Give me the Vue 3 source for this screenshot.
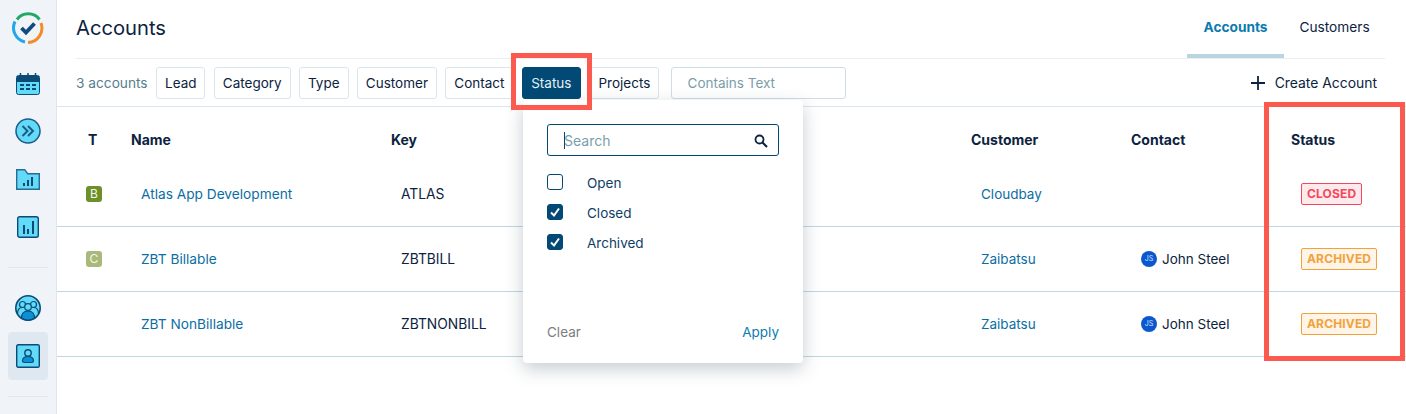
<script setup>
const filters = ['Lead', 'Category', 'Type', 'Customer', 'Contact', 'Status', 'Projects']
const rows = [
  { type: 'B', cls: 'tb', name: 'Atlas App Development', key: 'ATLAS', customer: 'Cloudbay', contact: '', status: 'CLOSED' },
  { type: 'C', cls: 'tc', name: 'ZBT Billable', key: 'ZBTBILL', customer: 'Zaibatsu', contact: 'John Steel', status: 'ARCHIVED' },
  { type: '', cls: '', name: 'ZBT NonBillable', key: 'ZBTNONBILL', customer: 'Zaibatsu', contact: 'John Steel', status: 'ARCHIVED' }
]
const options = [
  { label: 'Open', on: false },
  { label: 'Closed', on: true },
  { label: 'Archived', on: true }
]
</script>

<template>
  <div class="page">
    <aside class="side">
      <svg class="i-logo" width="32" height="32" viewBox="0 0 32 32" fill="none">
        <path d="M5 7.500A14 14 0 0 1 27.500 7.500" stroke="#1fa866" stroke-width="3"/>
        <path d="M29 11A14.500 14.500 0 0 1 16 30.500" stroke="#f28c28" stroke-width="3"/>
        <path d="M13 30A14.500 14.500 0 0 1 3 9.500" stroke="#22a7e8" stroke-width="3"/>
        <path d="M9.500 16l4.500 4.500 8.500-9" stroke="#0f4a80" stroke-width="3.800"/>
      </svg>
      <svg class="i-cal" width="24" height="22" viewBox="0 0 24 22">
        <rect x="0.5" y="2.5" width="23" height="19" rx="2" fill="#62dbf9" stroke="#0d4a75"/>
        <path d="M1 3h22v6H1z" fill="#0d4a75"/>
        <path d="M4.500 0v4M12 0v4M19.500 0v4" stroke="#0d4a75" stroke-width="1.500"/>
        <path d="M4 11h4v2H4zM10 11h4v2h-4zM16 11h4v2h-4zM4 15h4v2H4zM10 15h4v2h-4zM16 15h4v2h-4z" fill="#0d4a75"/>
      </svg>
      <svg class="i-go" width="26" height="26" viewBox="0 0 26 26" fill="none">
        <circle cx="13" cy="13" r="12" fill="#62dbf9" stroke="#1d5a85" stroke-width="1.500"/>
        <path d="M7.500 8l5 5-5 5M13 8l5 5-5 5" stroke="#1d5a85" stroke-width="2"/>
      </svg>
      <svg class="i-folder" width="24" height="21" viewBox="0 0 24 21">
        <path d="M.7.700h8l3 4h11.600v15.600H.7z" fill="#62dbf9" stroke="#2a6b96" stroke-width="1.400"/>
        <path d="M7 14h2v3H7zM11 11h2v6h-2zM15 8h2v9h-2z" fill="#0d4a75"/>
      </svg>
      <svg class="i-chart" width="22" height="22" viewBox="0 0 22 22">
        <rect x=".7" y=".7" width="20.600" height="20.600" rx="2" fill="#62dbf9" stroke="#0d4a75" stroke-width="1.400"/>
        <path d="M6 9h2v9H6zM10 13h2v5h-2zM15 5h2v13h-2z" fill="#0d4a75"/>
      </svg>
      <div class="rule r1"></div>
      <svg class="i-team" width="26" height="26" viewBox="0 0 26 26" fill="none">
        <circle cx="13" cy="13" r="12.200" fill="#62dbf9" stroke="#0d4a75" stroke-width="1.600"/>
        <circle cx="7.500" cy="9.500" r="3" stroke="#0d4a75" stroke-width="1.200"/>
        <circle cx="18.500" cy="9.500" r="3" stroke="#0d4a75" stroke-width="1.200"/>
        <path d="M2.500 19c0-4.500 2-6.500 5-6.500M23.500 19c0-4.500-2-6.500-5-6.500" stroke="#0d4a75" stroke-width="1.200"/>
        <circle cx="13" cy="12" r="3.300" fill="#62dbf9" stroke="#0d4a75" stroke-width="1.200"/>
        <path d="M6.500 23c0-4.500 2.500-7 6.500-7s6.500 2.500 6.500 7a12 12 0 0 1-13 0z" fill="#0a8fd8" stroke="#0d4a75" stroke-width="1.200"/>
      </svg>
      <div class="active">
        <svg width="24" height="24" viewBox="0 0 24 24" fill="none">
          <rect x=".7" y=".7" width="22.600" height="22.600" rx="1.500" fill="#62dbf9" stroke="#0d4a75" stroke-width="1.400"/>
          <circle cx="12" cy="9" r="3.200" stroke="#0d4a75" stroke-width="1.400"/>
          <path d="M6.500 17c0-3 2-4.500 5.500-4.500s5.500 1.500 5.500 4.500c0 1-1 1.500-2 1.500h-7c-1 0-2-.5-2-1.500z" fill="#0a8fd8" stroke="#0d4a75" stroke-width="1.200"/>
        </svg>
      </div>
      <div class="rule r2"></div>
    </aside>

    <main class="main">
      <header class="top">
        <h1>Accounts</h1>
        <nav class="tabs">
          <span class="tab on">Accounts</span>
          <span class="tab">Customers</span>
        </nav>
      </header>

      <div class="bar">
        <span class="count">3 accounts</span>
        <button v-for="f in filters" :key="f" class="filter" :class="{ sel: f === 'Status' }">{{ f }}</button>
        <div class="text-box">Contains Text</div>
        <div class="create">
          <svg width="14" height="14" viewBox="0 0 14 14"><path d="M7 0v14M0 7h14" stroke="#0c2340" stroke-width="1.800"/></svg>
          <span>Create Account</span>
        </div>
      </div>

      <div class="row head">
        <div class="c-t">T</div>
        <div>Name</div>
        <div>Key</div>
        <div></div>
        <div>Customer</div>
        <div>Contact</div>
        <div>Status</div>
      </div>
      <div v-for="r in rows" :key="r.key" class="row body">
        <div class="c-b"><span v-if="r.type" class="type" :class="r.cls">{{ r.type }}</span></div>
        <div class="in link wide">{{ r.name }}</div>
        <div class="in key">{{ r.key }}</div>
        <div></div>
        <div class="in link">{{ r.customer }}</div>
        <div class="in person">
          <template v-if="r.contact">
            <span class="avatar">JS</span>{{ r.contact }}
          </template>
        </div>
        <div class="in"><span class="badge" :class="r.status.toLowerCase()">{{ r.status }}</span></div>
      </div>
    </main>

    <div class="menu">
      <div class="search">
        <span class="caret"></span>
        <span class="ph">Search</span>
        <svg width="14" height="14" viewBox="0 0 14 14" fill="none">
          <circle cx="5.500" cy="5.500" r="4" stroke="#0c2340" stroke-width="1.800"/>
          <path d="M8.500 8.500l4.500 4.500" stroke="#0c2340" stroke-width="2.200"/>
        </svg>
      </div>
      <div class="opts">
        <label v-for="o in options" :key="o.label" class="opt">
          <span class="box" :class="{ on: o.on }">
            <svg v-if="o.on" width="12" height="12" viewBox="0 0 12 12" fill="none"><path d="M2 6.500l3 3 5-7" stroke="#fff" stroke-width="2"/></svg>
          </span>
          {{ o.label }}
        </label>
      </div>
      <div class="foot"><span class="clear">Clear</span><span class="apply">Apply</span></div>
    </div>

    <div class="mark m1"></div>
    <div class="mark m2"></div>
  </div>
</template>

<style scoped>
.page {
  position: relative;
  display: flex;
  width: 1406px;
  height: 414px;
  overflow: hidden;
  background: #fff;
  color: #0c2340;
  font: 14px/20px Inter, "Liberation Sans", sans-serif;
}
.side {
  flex: none;
  box-sizing: border-box;
  width: 57px;
  display: flex;
  flex-direction: column;
  align-items: center;
  padding-right: 1px;
  background: #f0f4f8;
  border-right: 1px solid #dbe6ee;
}
.i-logo { margin-top: 12px; }
.i-cal { margin-top: 29px; }
.i-go { margin-top: 23px; }
.i-folder { margin-top: 25px; }
.i-chart { margin-top: 26px; }
.rule { width: 40px; height: 1px; background: #dfe8ef; }
.r1 { margin-top: 29px; }
.i-team { margin-top: 27px; }
.active {
  display: flex;
  align-items: center;
  justify-content: center;
  width: 40px;
  height: 48px;
  margin-top: 11px;
  border-radius: 4px;
  background: #dfe8f0;
}
.r2 { margin-top: 16px; }
.main { flex: 1; min-width: 0; }
.top {
  display: flex;
  justify-content: space-between;
  align-items: stretch;
  box-sizing: border-box;
  height: 59px;
  margin: 0 21px 0 19px;
  border-bottom: 1px solid #e8eef3;
}
h1 {
  margin: 0;
  padding-top: 14px;
  font-size: 20.200px;
  line-height: 28px;
  font-weight: 400;
}
.tabs { display: flex; }
.tab {
  box-sizing: border-box;
  height: 58px;
  width: 101px;
  padding-top: 17px;
  text-align: center;
  font-size: 13.700px;
}
.tab.on {
  width: 97px;
  color: #0b7bb0;
  font-weight: 700;
  border-bottom: 4px solid #b9d5df;
}
.bar {
  display: flex;
  align-items: center;
  box-sizing: border-box;
  height: 48px;
  padding: 0 29px 0 19px;
  border-bottom: 1px solid #dbe6f0;
}
.count { flex: none; width: 71px; color: #55808f; font-size: 13.700px; margin-right: 9px; white-space: nowrap; }
.filter {
  box-sizing: border-box;
  height: 32px;
  padding: 0 8px;
  margin-right: 8.300px;
  border: 1px solid #dbe5ec;
  border-radius: 3px;
  background: #fff;
  color: #0c2340;
  font: 13.500px Inter, "Liberation Sans", sans-serif;
}
.filter.sel {
  padding: 0 8.500px;
  margin-right: 8.500px;
  background: #024a75;
  border-color: #024a75;
  color: #e6f0f5;
}
.text-box {
  box-sizing: border-box;
  width: 175px;
  height: 32px;
  margin-left: 3px;
  padding: 5px 16px;
  border: 1px solid #cfdde5;
  border-radius: 3px;
  color: #7a9ea9;
  font-size: 13.500px;
}
.create {
  display: flex;
  align-items: center;
  gap: 10px;
  margin-left: auto;
  font-size: 13.900px;
}
.row {
  display: grid;
  grid-template-columns: 74px 260px 260px 320px 160px 160px 1fr;
  align-items: center;
}
.head {
  height: 55px;
  padding-top: 11px;
  box-sizing: border-box;
  font-weight: 700;
}
.c-t { padding-left: 31px; }
.c-b { padding-left: 29px; }
.body {
  box-sizing: border-box;
  height: 65px;
  border-bottom: 1px solid #bfd7df;
  padding-bottom: 1px;
}
.in { padding-left: 10px; font-size: 13.500px; }
.in.wide { font-size: 13.700px; }
.in.key { font-size: 13.800px; }
.link { color: #0b6ea3; }
.type {
  display: block;
  width: 16px;
  height: 16px;
  border-radius: 3px;
  color: #f4f7ea;
  font-size: 12px;
  line-height: 16px;
  text-align: center;
}
.tb { background: #6f8f2a; }
.tc { background: #a9b97a; }
.person { display: flex; align-items: center; height: 20px; }
.avatar {
  display: block;
  width: 16px;
  height: 16px;
  margin-right: 5px;
  border-radius: 50%;
  background: #0b57d0;
  color: #cfe0f8;
  font-size: 7px;
  line-height: 16px;
  text-align: center;
}
.badge {
  display: inline-block;
  box-sizing: border-box;
  height: 22px;
  padding: 0 5px;
  border: 1px solid;
  border-radius: 2px;
  font-size: 12px;
  line-height: 20px;
  font-weight: 700;
  letter-spacing: .15px;
  vertical-align: middle;
}
.closed { color: #f5475b; border-color: #f5475b; background: #fdeaec; }
.archived { color: #f2a23a; border-color: #f2a23a; background: #fef4e8; }
.menu {
  position: absolute;
  left: 523px;
  top: 100px;
  box-sizing: border-box;
  display: flex;
  flex-direction: column;
  width: 280px;
  height: 263px;
  padding: 24px;
  border-radius: 4px;
  background: #fff;
  box-shadow: 0 6px 18px rgba(40, 60, 80, .26);
}
.search {
  position: relative;
  display: flex;
  align-items: center;
  justify-content: space-between;
  box-sizing: border-box;
  height: 32px;
  padding: 1px 10px 0 16px;
  border: 1px solid #024a75;
  border-radius: 3px;
  color: #7a9ea9;
}
.caret {
  position: absolute;
  left: 16px;
  top: 7px;
  width: 1px;
  height: 17px;
  background: #024a75;
}
.opts { display: flex; flex-direction: column; margin-top: 12px; }
.opt {
  display: flex;
  align-items: center;
  height: 30px;
  color: #0f3e66;
  font-size: 13.500px;
}
.box {
  display: flex;
  align-items: center;
  justify-content: center;
  box-sizing: border-box;
  width: 16px;
  height: 16px;
  margin-right: 24px;
  margin-bottom: 2px;
  border: 1px solid #024a75;
  border-radius: 3px;
}
.box.on { background: #024a75; }
.foot {
  display: flex;
  justify-content: space-between;
  margin-top: auto;
  margin-bottom: -3px;
  font-size: 13.500px;
}
.clear { color: #7d7d7d; }
.apply { color: #0b7bb0; }
.mark {
  position: absolute;
  box-sizing: border-box;
  border: 5px solid #fc5a4e;
}
.m1 { left: 511px; top: 53px; width: 81px; height: 57px; }
.m2 { left: 1264px; top: 102px; width: 141px; height: 259px; }
</style>
